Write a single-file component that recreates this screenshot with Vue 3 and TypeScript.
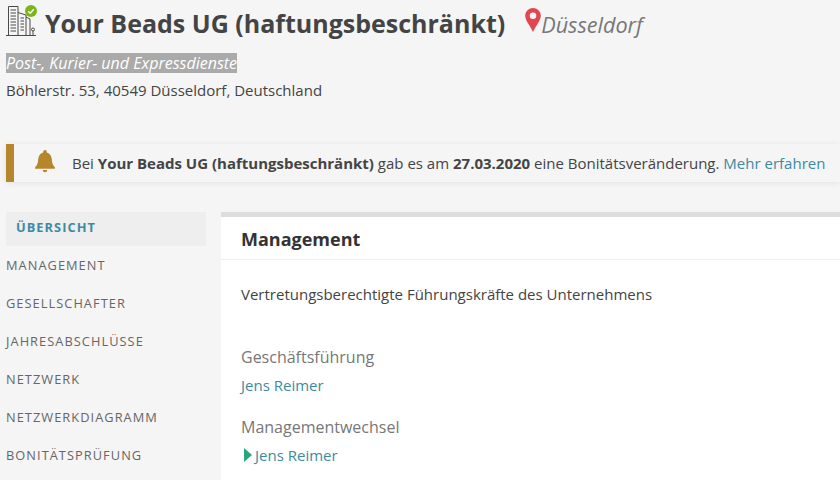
<script setup lang="ts">
const navItems: string[] = ['Management', 'Gesellschafter', 'Jahresabschlüsse', 'Netzwerk', 'Netzwerkdiagramm', 'Bonitätsprüfung']
</script>

<template>
  <div class="page">
    <header class="head">
      <div class="title-row">
        <svg class="building" width="30" height="36" viewBox="0 0 30 36" fill="none" stroke="#4a4a4a" stroke-width="1">
          <path d="M2.500 35V6.500h9.500V35M12 12.500l8 2.500V35M20 17l4 2V35M0 35.500h30" />
          <path d="M4.500 10h5.500M4.500 13h5.500M4.500 16h5.500M4.500 19h5.500M4.500 22h5.500M4.500 25h5.500M4.500 28h5.500M4.500 31h5.500M14.500 18h3.500M14.500 21h3.500M14.500 24h3.500M14.500 27h3.500M14.500 30h3.500" />
          <circle cx="27" cy="29.500" r="1.500" />
          <path d="M27 31v4" />
        </svg>
        <svg class="check" width="12" height="12" viewBox="0 0 12 12">
          <circle cx="6" cy="6" r="6" fill="#7cb518" />
          <path d="M3.200 6.200l2 2 3.600-4" stroke="#fff" stroke-width="1.400" fill="none" />
        </svg>
        <h1>Your Beads UG (haftungsbeschränkt)</h1>
        <svg class="pin" width="16" height="24" viewBox="0 0 16 24">
          <path fill-rule="evenodd" fill="#e2474f" d="M8 0a7.800 7.800 0 0 1 7.800 7.800c0 4.800-4.600 9.400-7.800 16.200C4.800 17.200.2 12.600.2 7.800A7.800 7.800 0 0 1 8 0zm0 4.500a3.300 3.300 0 1 0 0 6.600 3.300 3.300 0 0 0 0-6.600z" />
        </svg>
        <span class="city">Düsseldorf</span>
      </div>
      <div class="sector"><span>Post-, Kurier- und Expressdienste</span></div>
      <div class="address">Böhlerstr. 53, 40549 Düsseldorf, Deutschland</div>
    </header>

    <div class="notice">
      <svg class="bell" width="20" height="23" viewBox="0 0 22 24" preserveAspectRatio="none">
        <path fill="#b5862c" d="M11 0a2 2 0 0 1 2 2v.6c3.500.9 5.200 3.900 5.500 7.400.3 3.600 1 6.200 3.500 8.200v1.300H0v-1.300c2.500-2 3.200-4.600 3.500-8.200C3.800 6.500 5.500 3.500 9 2.600V2a2 2 0 0 1 2-2zM8.500 20.800h5a2.500 2.500 0 0 1-5 0z" />
      </svg>
      <p>Bei <b>Your Beads UG (haftungsbeschränkt)</b> gab es am <b>27.03.2020</b> eine Bonitätsveränderung. <a>Mehr erfahren</a></p>
    </div>

    <div class="columns">
      <nav class="side">
        <div class="nav-item active">Übersicht</div>
        <div v-for="item in navItems" :key="item" class="nav-item">{{ item }}</div>
      </nav>
      <main class="panel">
        <h2>Management</h2>
        <div class="body">
          <p class="lead">Vertretungsberechtigte Führungskräfte des Unternehmens</p>
          <h3 class="first">Geschäftsführung</h3>
          <a class="person">Jens Reimer</a>
          <h3>Managementwechsel</h3>
          <div class="change">
            <span class="arrow"></span>
            <a class="person">Jens Reimer</a>
          </div>
        </div>
      </main>
    </div>
  </div>
</template>

<style>
html, body { margin: 0; background: #f5f5f5; overflow: hidden; }
</style>

<style scoped>
.page {
  width: 840px;
  height: 480px;
  overflow: hidden;
  background: #f5f5f5;
  color: #444;
  font-family: "Open Sans", sans-serif;
  font-size: 15px;
}
.head { padding: 0 6px; }
.title-row {
  display: flex;
  align-items: flex-start;
  height: 53px;
  position: relative;
}
.building { flex: none; }
.check { position: absolute; left: 19px; top: 5px; }
h1 {
  margin: 5px 0 0 9px;
  font-size: 25px;
  line-height: 36px;
  font-weight: 700;
  color: #444;
  white-space: nowrap;
}
.pin { margin: 8px 0 0 20px; flex: none; }
.city {
  margin-top: 8px;
  font-size: 21.600px;
  line-height: 34px;
  font-style: italic;
  color: #777;
}
.sector { line-height: 20px; font-size: 16px; font-style: italic; color: #fff; }
.sector span { background: #aaa; display: inline-block; }
.address { margin-top: 7px; line-height: 20px; font-size: 15px; color: #444; }
.notice {
  display: flex;
  align-items: center;
  height: 38px;
  margin: 44px 0 0 6px;
  border-left: 8px solid #b5862c;
  box-shadow: 0 1px 6px rgba(0, 0, 0, .08);
  padding-left: 21px;
}
.bell { flex: none; margin-bottom: 3px; }
.notice p { margin: 0 0 0 17px; white-space: nowrap; }
.notice b { font-weight: 700; }
a { color: #3d8aa3; }
.columns { display: flex; margin-top: 30px; }
.side { width: 200px; margin-left: 6px; flex: none; }
.nav-item {
  height: 38px;
  line-height: 38px;
  font-size: 12.800px;
  letter-spacing: 1.050px;
  text-transform: uppercase;
  color: #666;
  white-space: nowrap;
}
.nav-item.active {
  height: 34px;
  line-height: 30px;
  padding-left: 10px;
  background: #eee;
  color: #3d8aa3;
  font-weight: 700;
}
.panel {
  flex: 1;
  margin-left: 15px;
  background: #fff;
  border-top: 5px solid #ddd;
  height: 300px;
}
h2 {
  margin: 0;
  height: 42px;
  padding-left: 20px;
  line-height: 44px;
  font-size: 18px;
  font-weight: 700;
  color: #333;
  border-bottom: 1px solid #eee;
}
.body { padding: 0 20px; }
.lead { margin: 0; padding-top: 24px; line-height: 20px; }
h3 {
  margin: 0;
  padding-top: 21px;
  font-size: 16px;
  line-height: 22px;
  font-weight: 400;
  color: #777;
}
h3.first { padding-top: 42px; }
.person { display: block; margin-top: 7px; line-height: 20px; }
.change { display: flex; align-items: center; }
.arrow {
  width: 0;
  height: 0;
  margin: 7px 3px 0 3px;
  border-left: 8px solid #27a57b;
  border-top: 7px solid transparent;
  border-bottom: 7px solid transparent;
}
</style>
